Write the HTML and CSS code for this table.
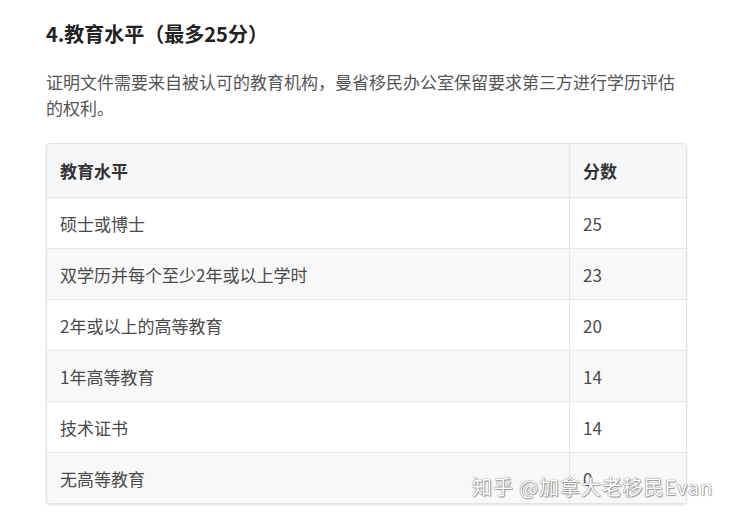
FILE: index.html
```html
<!DOCTYPE html>
<html lang="zh-CN">
<head>
<meta charset="utf-8">
<link rel="stylesheet" href="styles.css">
</head>
<body>
<main class="article">
  <h3 class="title">4.教育水平（最多25分）</h3>
  <p class="desc">证明文件需要来自被认可的教育机构，曼省移民办公室保留要求第三方进行学历评估的权利。</p>
  <div class="table-wrap">
    <table class="score-table">
      <thead>
        <tr><th class="c1">教育水平</th><th class="c2">分数</th></tr>
      </thead>
      <tbody>
        <tr><td>硕士或博士</td><td>25</td></tr>
        <tr><td>双学历并每个至少2年或以上学时</td><td>23</td></tr>
        <tr><td>2年或以上的高等教育</td><td>20</td></tr>
        <tr><td>1年高等教育</td><td>14</td></tr>
        <tr><td>技术证书</td><td>14</td></tr>
        <tr><td>无高等教育</td><td>0</td></tr>
      </tbody>
    </table>
  </div>
</main>
<div class="watermark">知乎 @加拿大老移民Evan</div>
</body>
</html>
```
FILE: styles.css
```css
html, body {
  margin: 0;
  padding: 0;
  background: #fff;
}
body {
  font-family: "Noto Sans CJK SC", "Noto Sans", sans-serif;
  color: #333;
  position: relative;
  width: 730px;
  height: 519px;
  overflow: hidden;
}
.article {
  padding: 20px 43px 0 46px;
}
.title {
  margin: 0;
  font-size: 20px;
  line-height: 28px;
  font-weight: 700;
  color: #222;
}
.desc {
  margin: 21px 0 0;
  font-size: 17px;
  line-height: 26px;
  color: #555;
}
.table-wrap {
  margin-top: 22px;
  border: 1px solid #e3e3e3;
  border-radius: 4px;
  overflow: hidden;
  box-shadow: 0 1px 2px rgba(0,0,0,0.12);
}
.score-table {
  width: 100%;
  border-collapse: collapse;
  font-size: 17px;
  line-height: 25px;
}
.score-table th,
.score-table td {
  text-align: left;
  padding: 13px 13px 12px;
  border-bottom: 1px solid #e6e6e6;
}
.score-table th {
  padding: 14px 13px;
  background: #f6f7f9;
  font-weight: 700;
  color: #333;
}
.score-table td { color: #4a4a4a; }
.score-table tr > :first-child {
  width: 496px;
  border-right: 1px solid #e6e6e6;
}
.score-table tbody tr:nth-child(even) td {
  background: #f8f8f8;
}
.score-table tbody tr:last-child td {
  border-bottom: none;
}
.watermark {
  position: absolute;
  left: 472px;
  top: 473px;
  font-family: "Noto Sans CJK SC", sans-serif;
  font-size: 20px;
  line-height: 28px;
  color: #fff;
  letter-spacing: 0.9px;
  text-shadow: 0 0 1px #777, 0 0 1px #777, 1px 1px 1px rgba(0,0,0,0.35);
}
```
